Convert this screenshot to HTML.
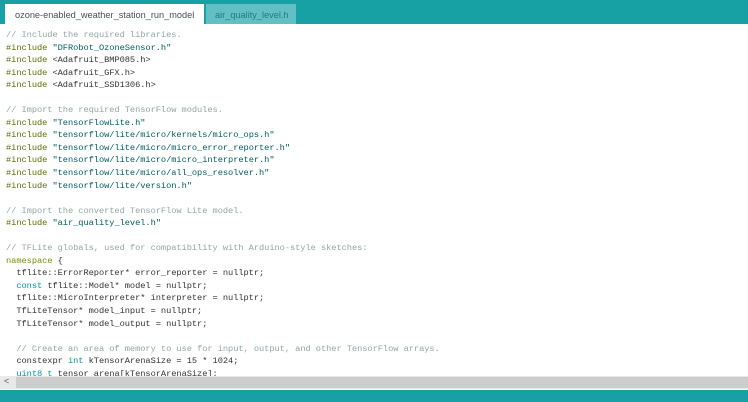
<!DOCTYPE html>
<html><head><meta charset="utf-8"><style>
*{margin:0;padding:0;box-sizing:border-box}
html,body{width:748px;height:402px;overflow:hidden;background:#fff}
.top{position:absolute;left:0;top:0;width:748px;height:24px;background:#17a1a5}
.tab1{position:absolute;left:5px;top:4px;width:199px;height:20px;background:#fff;color:#434f54;font:9.2px "Liberation Sans",sans-serif;padding:6px 0 0 10px}
.tab2{position:absolute;left:206px;top:4px;width:90px;height:20px;background:#62bfc3;color:#1c7e82;font:9.2px "Liberation Sans",sans-serif;padding:6px 0 0 9px}
pre{position:absolute;left:6px;top:29px;font:8.7px/12.55px "Liberation Mono",monospace;color:#333;letter-spacing:-0.05px}
.c{color:#95a5a6}.p{color:#5e6d03}.s{color:#005c5f}.k{color:#00979c}.n{color:#728e00}
.sb{position:absolute;left:0;top:376px;width:748px;height:13px;background:#e9e9e9}
.sb i{position:absolute;left:16px;top:1px;right:0;height:11px;background:#cdcdcd}
.sb b{position:absolute;left:4px;top:0;font:9px "Liberation Sans",sans-serif;color:#555;font-weight:normal}
.bot{position:absolute;left:0;top:390px;width:748px;height:12px;background:#17a1a5}
</style></head><body>
<div class="top"></div>
<div class="tab1">ozone-enabled_weather_station_run_model</div>
<div class="tab2">air_quality_level.h</div>
<pre><span class="c">// Include the required libraries.</span>
<span class="p">#include</span> <span class="s">"DFRobot_OzoneSensor.h"</span>
<span class="p">#include</span> &lt;Adafruit_BMP085.h&gt;
<span class="p">#include</span> &lt;Adafruit_GFX.h&gt;
<span class="p">#include</span> &lt;Adafruit_SSD1306.h&gt;

<span class="c">// Import the required TensorFlow modules.</span>
<span class="p">#include</span> <span class="s">"TensorFlowLite.h"</span>
<span class="p">#include</span> <span class="s">"tensorflow/lite/micro/kernels/micro_ops.h"</span>
<span class="p">#include</span> <span class="s">"tensorflow/lite/micro/micro_error_reporter.h"</span>
<span class="p">#include</span> <span class="s">"tensorflow/lite/micro/micro_interpreter.h"</span>
<span class="p">#include</span> <span class="s">"tensorflow/lite/micro/all_ops_resolver.h"</span>
<span class="p">#include</span> <span class="s">"tensorflow/lite/version.h"</span>

<span class="c">// Import the converted TensorFlow Lite model.</span>
<span class="p">#include</span> <span class="s">"air_quality_level.h"</span>

<span class="c">// TFLite globals, used for compatibility with Arduino-style sketches:</span>
<span class="n">namespace</span> {
  tflite::ErrorReporter* error_reporter = nullptr;
  <span class="k">const</span> tflite::Model* model = nullptr;
  tflite::MicroInterpreter* interpreter = nullptr;
  TfLiteTensor* model_input = nullptr;
  TfLiteTensor* model_output = nullptr;

  <span class="c">// Create an area of memory to use for input, output, and other TensorFlow arrays.</span>
  constexpr <span class="k">int</span> kTensorArenaSize = 15 * 1024;
  <span class="k">uint8_t</span> tensor_arena[kTensorArenaSize];</pre>
<div class="sb"><b>&lt;</b><i></i></div>
<div class="bot"></div>
</body></html>
